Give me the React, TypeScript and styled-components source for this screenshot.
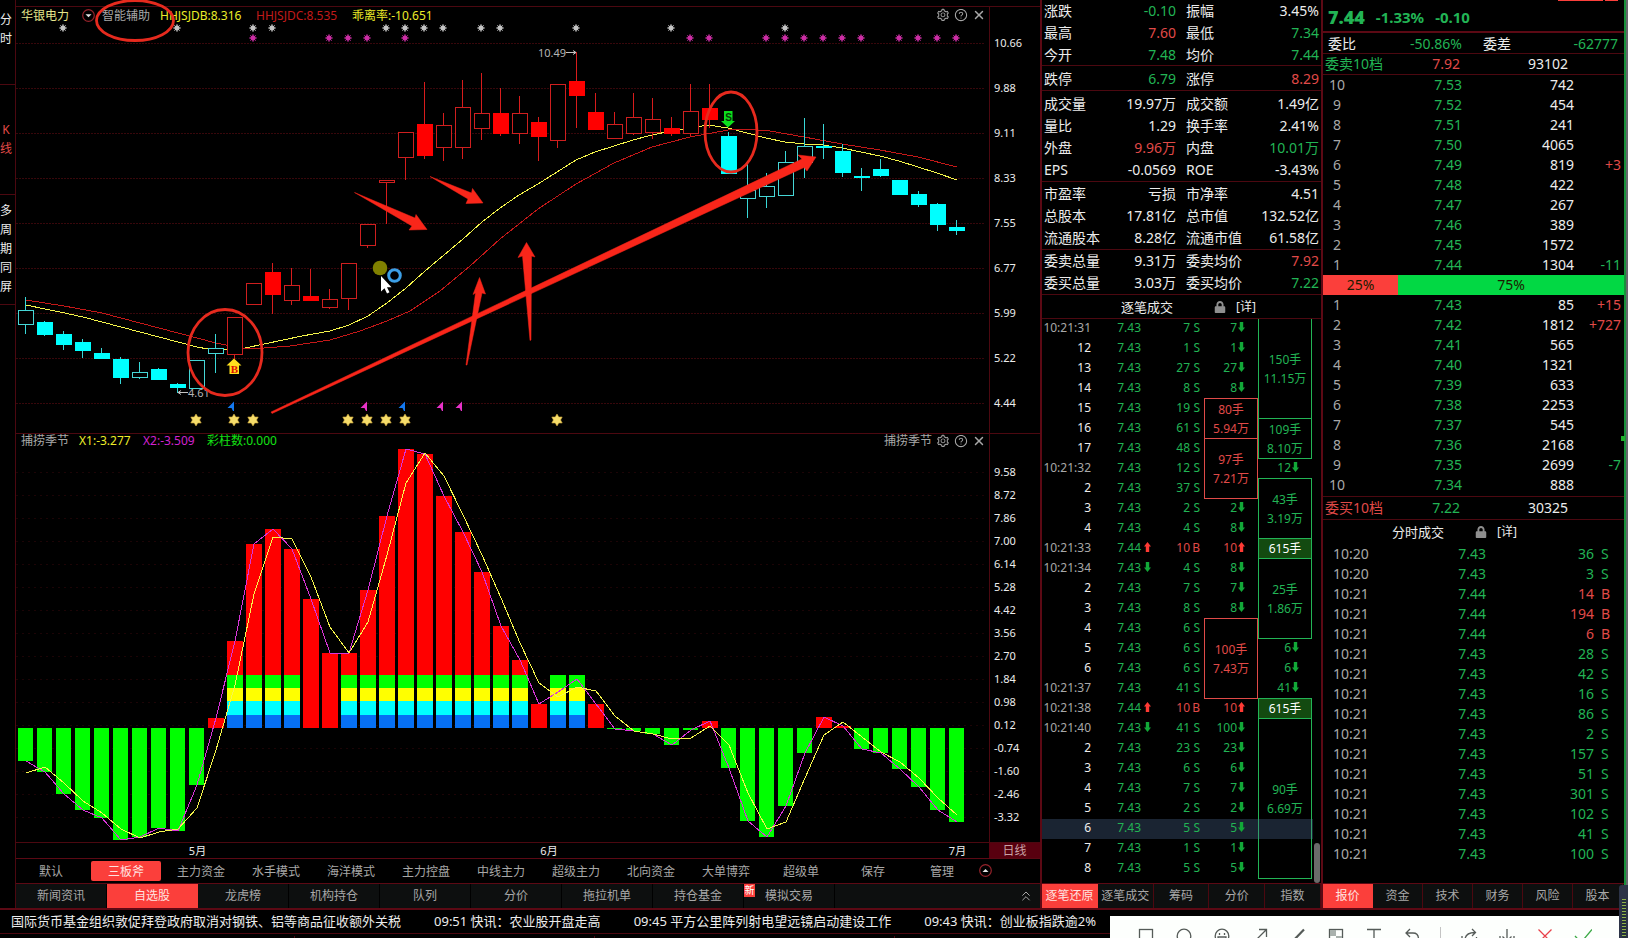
import React from "react";
import styled, { createGlobalStyle, css } from "styled-components";
import { AiOutlineSetting, AiOutlineQuestionCircle } from "react-icons/ai";
import { FaLock } from "react-icons/fa";
import { ChevronsUp, X } from "lucide-react";

const c = {
  green: "#22b455",
  red: "#e04a48",
  white: "#ececec",
  grey: "#a8a8a8",
  line: "#4c0810",
  frame: "#5c0914",
  active: "#fb3f3b",
  cyan: "#00ffff",
  pen: "#f9261a",
};

type Tone = "green" | "red" | "white" | "grey";

const GlobalStyle = createGlobalStyle`
  * { box-sizing: border-box; }
  html, body { margin: 0; background: #000; }
  body {
    overflow: hidden;
    color: ${c.white};
    font: 12px/20px "Noto Sans", "Noto Sans CJK SC", sans-serif;
  }
  button { margin: 0; padding: 0; border: 0; background: none; color: inherit; font: inherit; cursor: pointer; }
  table { border-collapse: separate; border-spacing: 0; table-layout: fixed; }
  td, th { padding: 0; font-weight: 400; white-space: nowrap; }
  dl, dt, dd, h2, p { margin: 0; font-weight: 400; }
`;

/* ---------- page frame ---------- */

const Page = styled.div`
  position: relative;
  display: flex;
  flex-direction: column;
  min-height: 100vh;
  overflow: hidden;
`;

const Workspace = styled.div`
  display: flex;
  align-items: stretch;
`;

const SideNav = styled.nav`
  display: flex;
  flex-direction: column;
  width: 16px;
  border-right: 1px solid ${c.line};
`;

const SideButton = styled.button<{ $first?: boolean; $active?: boolean }>`
  height: ${(p) => (p.$first ? 85 : 110)}px;
  padding-bottom: ${(p) => (p.$first ? 27 : 2)}px;
  padding-right: 3px;
  border-bottom: 1px solid ${c.line};
  color: ${(p) => (p.$active ? c.red : c.white)};
  line-height: 19px;
  word-break: break-all;
`;

const ChartColumn = styled.main`
  display: flex;
  flex: 1;
  flex-direction: column;
  min-width: 0;
  padding-top: 6px;
`;

const Pane = styled.section`
  display: flex;
  border-top: 1px solid ${c.line};
`;

const PaneBody = styled.div`
  flex: 1;
  min-width: 0;
`;

const PaneHeader = styled.header<{ $height: number }>`
  display: flex;
  align-items: center;
  gap: 10px;
  height: ${(p) => p.$height}px;
  padding: 0 3px 2px 5px;
  line-height: 15px;
  white-space: nowrap;
`;

const Legend = styled.span<{ $color: string; $width?: number }>`
  min-width: ${(p) => p.$width || 0}px;
  color: ${(p) => p.$color};
`;

const PaneTools = styled.div`
  display: flex;
  align-items: center;
  gap: 4px;
  margin-left: auto;
  color: ${c.grey};
`;

const ToolButton = styled.button`
  display: flex;
  width: 14px;
  height: 14px;
`;

const MenuButton = styled.button`
  display: flex;
  margin: 0 -3px 0 3px;
`;

const Plot = styled.svg`
  display: block;
  position: relative;
  width: 100%;
  overflow: visible;
  pointer-events: none;
`;

const Axis = styled.div<{ $pad: number; $step: number }>`
  width: 51px;
  padding: ${(p) => p.$pad}px 0 0 4px;
  border-left: 1px solid ${c.line};
  font-size: 11px;
  line-height: ${(p) => p.$step}px;
`;

const DateRow = styled.div`
  display: flex;
  height: 16px;
  border-top: 1px solid ${c.line};
  font-size: 11px;
  line-height: 15px;
`;

const Months = styled.div`
  display: grid;
  flex: 1;
  grid-template-columns: repeat(50, 19px);
  padding-left: 1px;
`;

const Month = styled.span<{ $col: string }>`
  grid-column: ${(p) => p.$col};
  justify-self: center;
  white-space: nowrap;
`;

const Period = styled.button`
  width: 51px;
  background: #58000f;
  color: #c9a3a6;
  font-size: 12px;
  line-height: 15px;
`;

const ModeBar = styled.nav`
  display: flex;
  align-items: center;
  gap: 5px;
  height: 25px;
  border-top: 1px solid ${c.frame};
  color: ${c.grey};
`;

const ModeTab = styled.button<{ $active?: boolean; $narrow?: boolean }>`
  width: ${(p) => (p.$narrow ? 64 : 70)}px;
  height: 20px;
  border-radius: 2px;
  background: ${(p) => (p.$active ? c.active : "transparent")};
  color: ${(p) => (p.$active ? "#ffe3e0" : c.grey)};
  line-height: 19px;
`;

const TabBar = styled.nav`
  display: flex;
  height: 25px;
  margin-top: auto;
  border-top: 1px solid ${c.frame};
  background: #0d0f0f;
`;

const Tab = styled.button<{ $width: number; $active?: boolean; $rule?: string }>`
  position: relative;
  width: ${(p) => p.$width}px;
  border-right: 1px solid ${(p) => (p.$active ? c.active : p.$rule || "#000")};
  background: ${(p) => (p.$active ? c.active : "transparent")};
  color: ${(p) => (p.$active ? "#ffe3e0" : c.grey)};
  line-height: 22px;
  white-space: nowrap;
`;

const NewBadge = styled.span`
  position: absolute;
  top: 0;
  left: 0;
  width: 11px;
  height: 13px;
  background: ${c.active};
  color: #fff;
  font-size: 10px;
  line-height: 12px;
`;

const ExpandButton = styled.button`
  display: flex;
  align-items: center;
  margin-left: auto;
  padding-right: 6px;
  color: ${c.grey};
`;

/* ---------- quote panels ---------- */

const Panel = styled.aside<{ $width: number }>`
  display: flex;
  flex-direction: column;
  width: ${(p) => p.$width}px;
  border-left: 2px solid ${c.frame};
`;

const StatGroup = styled.dl<{ $top?: number }>`
  display: grid;
  grid-template-columns: 132px 133px;
  column-gap: 10px;
  padding: ${(p) => p.$top || 0}px 2px 0;
  border-bottom: 1px solid ${c.line};
  font-size: 14px;
  line-height: 22px;

  &:first-child {
    height: 66px;
    line-height: 21px;
  }
`;

const Stat = styled.div`
  display: flex;
  justify-content: space-between;
  height: 22px;
`;

const StatValue = styled.dd<{ $tone: Tone }>`
  color: ${(p) => c[p.$tone]};
`;

const TradesHeader = styled.header<{ $left: number; $gap: number; $rule?: boolean }>`
  display: flex;
  align-items: center;
  height: 24px;
  padding-left: ${(p) => p.$left}px;
  border-bottom: ${(p) => (p.$rule ? `1px solid ${c.line}` : "0")};
  font-size: 13px;

  h2 {
    font-size: 13px;
  }
  svg {
    margin: 0 10px 0 ${(p) => p.$gap}px;
    color: #8f8f8f;
  }
`;

const DetailLink = styled.a`
  color: ${c.white};
  font-size: 12px;
  text-decoration: none;
`;

const TickArea = styled.div`
  display: flex;
  height: 564px;
`;

const TickTable = styled.table`
  width: 271px;
  height: 560px;
  font-size: 12px;
  line-height: 18px;
`;

const TickRow = styled.tr<{ $selected?: boolean }>`
  height: 20px;

  ${(p) =>
    p.$selected &&
    css`
      position: relative;
      z-index: 0;

      &::after {
        content: "";
        position: absolute;
        inset: 0;
        z-index: -1;
        background: rgba(80, 112, 155, 0.32);
      }
    `}
`;

const TickTime = styled.th<{ $full: boolean }>`
  padding: 0 1px 2px 0;
  color: ${(p) => (p.$full ? c.grey : c.white)};
  text-align: right;
`;

const TickCell = styled.td<{ $tone: Tone; $right: number }>`
  padding: 0 ${(p) => p.$right}px 2px 0;
  color: ${(p) => c[p.$tone]};
  text-align: right;
`;

const Slot = styled.span<{ $width: number }>`
  display: inline-block;
  width: ${(p) => p.$width}px;
  text-align: right;
`;

const BlockCell = styled.td<{ $tone: "red" | "green"; $open?: boolean; $solid?: boolean }>`
  padding-bottom: 1px;
  background: ${(p) => (p.$solid ? "#134a10" : "transparent")};
  box-shadow: inset 1px 0 ${(p) => c[p.$tone]}, inset -1px 0 ${(p) => c[p.$tone]},
    inset 0 -1px ${(p) => c[p.$tone]}, 0 ${(p) => (p.$open ? 0 : -1)}px ${(p) => c[p.$tone]};
  color: ${(p) => (p.$solid ? "#fff" : c[p.$tone])};
  line-height: 19px;
  text-align: center;
`;

const ScrollTrack = styled.div`
  display: flex;
  flex-direction: column;
  justify-content: flex-end;
  width: 8px;
`;

const ScrollThumb = styled.div`
  width: 6px;
  height: 40px;
  margin-left: 1px;
  border-radius: 3px;
  background: #6a6a6a;
`;

const PriceHead = styled.header`
  display: flex;
  align-items: center;
  gap: 11px;
  height: 33px;
  padding: 3px 5px 0;
  border-bottom: 2px solid ${c.frame};
  color: ${c.green};
  font-size: 15px;
  font-weight: 700;

  strong {
    font-size: 18px;
  }
`;

const TopMarks = styled.div`
  display: flex;
  gap: 2px;
  align-self: flex-start;
  margin: -3px 1px 0 auto;

  i {
    width: 45px;
    height: 1px;
    background: ${c.active};
  }
  i + i {
    width: 13px;
  }
`;

const RatioRow = styled.dl`
  display: grid;
  grid-template-columns: 134px 135px;
  column-gap: 21px;
  height: 21px;
  padding-left: 5px;
  border-bottom: 1px solid ${c.line};
  font-size: 14px;
  line-height: 21px;

  div {
    display: flex;
    justify-content: space-between;
  }
`;

const SumRow = styled.dl<{ $top?: boolean }>`
  display: grid;
  grid-template-columns: 62px 73px 108px;
  height: ${(p) => (p.$top ? 24 : 21)}px;
  padding-left: 2px;
  margin-top: ${(p) => (p.$top ? 1 : 0)}px;
  border-top: ${(p) => (p.$top ? `1px solid ${c.line}` : "0")};
  border-bottom: 1px solid ${c.line};
  font-size: 14px;
  line-height: ${(p) => (p.$top ? 22 : 20)}px;
  text-align: right;

  dt {
    text-align: left;
  }
`;

const Toned = styled.span<{ $tone: Tone }>`
  color: ${(p) => c[p.$tone]};
`;

const DepthTable = styled.table`
  width: 301px;
  font-size: 14px;
  line-height: 20px;
  text-align: right;

  tr {
    height: 20px;
  }
  th {
    color: ${c.grey};
    text-align: center;
  }
  td:last-child {
    padding-right: 3px;
  }
`;

const RatioBar = styled.div`
  display: flex;
  height: 20px;
  color: #1c1c00;
  font-size: 14px;
  line-height: 20px;
  text-align: center;
`;

const RatioPart = styled.div<{ $share: number; $color: string }>`
  flex: ${(p) => p.$share} 1 0;
  background: ${(p) => p.$color};
`;

const MinuteTable = styled.table`
  width: 301px;
  font-size: 14px;
  line-height: 20px;
  text-align: right;

  tr {
    height: 20px;
  }
  th {
    padding-left: 10px;
    color: ${c.grey};
    text-align: left;
  }
  td:last-child {
    padding-left: 7px;
    text-align: left;
  }
`;

const WindowEdge = styled.div`
  flex: 0 0 4px;
  border-left: 2px solid #18913a;
  background: #66666c;
`;

const EdgeDot = styled.i`
  position: absolute;
  top: 436px;
  right: 3px;
  width: 4px;
  height: 5px;
  background: #1fae2c;
`;

const Meter = styled.div`
  position: absolute;
  right: 0;
  bottom: 0;
  width: 9px;
  height: 53px;
  padding: 14px 2px 0 3px;
  border-radius: 3px 0 0 0;
  background: #2c3347;

  &::before {
    content: "";
    display: block;
    height: 100%;
    background: repeating-linear-gradient(#8fb04a 0 1px, #23303a 1px 3px);
  }
`;

/* ---------- bottom strips ---------- */

const Ticker = styled.div`
  display: flex;
  gap: 33px;
  height: 26px;
  padding-left: 11px;
  border-top: 2px solid ${c.frame};
  border-bottom: 1px solid ${c.line};
  overflow: hidden;
`;

const NewsLink = styled.a`
  color: ${c.white};
  font-size: 13px;
  line-height: 23px;
  text-decoration: none;
  white-space: nowrap;
`;

const StatusBar = styled.div`
  display: grid;
  flex: 1;
  grid-template-columns: 294px 300px 300px 1fr;
  padding-top: 2px;

  span + span {
    border-left: 1px solid ${c.line};
  }
`;

const CaptureBar = styled.div`
  position: absolute;
  right: 9px;
  bottom: 0;
  display: flex;
  height: 22px;
  padding: 0 17px;
  background: #fdfffd;
  overflow: hidden;
`;

const CaptureButton = styled.button`
  width: 38px;
  height: 30px;
  padding-top: 9px;

  svg {
    display: block;
    margin: 0 auto;
  }
`;

const CaptureRule = styled.i`
  width: 1px;
  height: 20px;
  margin: 11px 9px 0;
  background: #c4c4c4;
`;

/* ---------- chart data ---------- */

const STEP = 19;
const cx = (i: number) => 26 + STEP * i;

// [kind, body top, body bottom, wick top, wick bottom]; upper case kinds are solid
type Candle = [string, number, number, number, number];
const candles: Candle[] = [
  ["d", 310, 325, 297, 334], ["D", 322, 335, 321, 336], ["D", 334, 345, 331, 350], ["D", 342, 351, 339, 358],
  ["D", 353, 359, 348, 359], ["D", 359, 378, 357, 384], ["d", 372, 378, 362, 379], ["D", 369, 380, 368, 380],
  ["D", 384, 388, 383, 393], ["d", 360, 389, 360, 389], ["d", 348, 354, 334, 373], ["u", 317, 355, 317, 359],
  ["u", 283, 305, 283, 305], ["U", 272, 295, 263, 314], ["u", 285, 301, 268, 305], ["U", 296, 301, 269, 301],
  ["u", 299, 308, 289, 309], ["u", 263, 299, 263, 310], ["u", 224, 246, 224, 248], ["u", 180, 183, 180, 224],
  ["u", 132, 158, 132, 180], ["U", 124, 156, 82, 159], ["u", 125, 148, 113, 161], ["u", 107, 148, 80, 159],
  ["u", 113, 129, 73, 140], ["U", 113, 134, 88, 136], ["u", 113, 134, 96, 144], ["U", 122, 137, 117, 161],
  ["u", 84, 141, 84, 148], ["U", 81, 96, 52, 128], ["U", 112, 130, 93, 130], ["u", 124, 139, 112, 139],
  ["u", 117, 134, 93, 135], ["u", 119, 133, 98, 139], ["U", 128, 134, 117, 136], ["u", 111, 134, 84, 136],
  ["U", 108, 120, 84, 128], ["D", 136, 174, 132, 174], ["d", 190, 199, 164, 218], ["d", 186, 197, 173, 208],
  ["d", 162, 196, 151, 196], ["d", 146, 163, 118, 178], ["D", 146, 148, 124, 159], ["D", 151, 173, 144, 177],
  ["D", 176, 178, 168, 191], ["D", 169, 176, 159, 177], ["D", 180, 195, 180, 195], ["D", 194, 205, 191, 207],
  ["D", 204, 225, 203, 231], ["D", 227, 231, 220, 235],
];

const fastLine =
  "26,305 45,309 60,312 83,317 102,322 121,327 140,332 159,337 178,342 197,347 208,349 227,350 245,348 264,344 283,340 302,336 330,331 349,325 368,316 387,303 406,288 425,271 444,255 463,239 482,222 500,208 519,195 538,184 557,172 576,160 595,152 614,146 633,140 652,135 671,131 690,128 708,125 728,128 747,133 766,138 785,142 804,144 823,145 842,148 861,152 880,156 899,161 918,167 937,173 957,180";
const slowLine =
  "26,300 64,306 102,313 140,323 178,333 216,343 240,348 264,348 290,346 330,340 360,331 387,321 410,311 440,291 470,266 500,239 538,209 576,184 614,163 652,147 690,137 728,130 745,129 770,131 804,137 842,144 880,150 918,157 957,167";

const greyBursts = [2, 8, 12, 13, 19, 20, 21, 22, 24, 25, 29, 34, 40];
const pinkBursts = [12, 16, 17, 18, 20, 35, 36, 39, 40, 41, 42, 43, 44, 46, 47, 48, 49];
const goldStars = [9, 11, 12, 17, 18, 19, 20, 28];
const flags: [number, string][] = [[11, "#1478f0"], [18, "#e832c8"], [20, "#1478f0"], [22, "#e832c8"], [23, "#e832c8"]];

const ZERO = 728;
const barEnds = [
  761, 772, 794, 810, 818, 840, 837, 828, 831, 785, 718, 641, 544, 529, 549, 599, 653, 653, 590, 516, 449, 454, 496, 532,
  572, 626, 660, 704, 675, 675, 704, 729, 731, 734, 745, 730, 721, 768, 821, 837, 806, 753, 717, 726, 749, 753, 769, 787,
  810, 822,
];
const rainbow = new Set([11, 12, 13, 14, 17, 18, 19, 20, 21, 22, 23, 24, 25, 26, 28, 29]);
const bands: [number, number, string][] = [
  [675, 13, "#00ff00"], [688, 13, "#ffff00"], [701, 14, "#00ffff"], [715, 13, "#0670f4"],
];
const x2Line = barEnds.map((y, i) => (i === 28 ? 692 : i === 29 ? 679 : y));
const x1Line = [
  773, 767, 783, 801, 813, 829, 838, 832, 829, 808, 750, 685, 594, 537, 539, 577, 627, 653, 622, 555, 483, 453, 476, 515,
  555, 598, 643, 683, 697, 687, 691, 716, 731, 734, 739, 738, 726, 745, 793, 829, 822, 778, 735, 722, 737, 752, 762, 778,
  798, 815,
];
const toPoints = (ys: number[]) => ys.map((y, i) => `${cx(i)},${y}`).join(" ");

const priceTicks = ["10.66", "9.88", "9.11", "8.33", "7.55", "6.77", "5.99", "5.22", "4.44"];
const indexTicks = [
  "9.58", "8.72", "7.86", "7.00", "6.14", "5.28", "4.42", "3.56", "2.70", "1.84", "0.98", "0.12", "-0.74", "-1.60", "-2.46", "-3.32",
];

/* ---------- chart parts ---------- */

const Burst = ({ x, y, color }: { x: number; y: number; color: string }) => (
  <g stroke={color} transform={`translate(${x} ${y})`}>
    <circle r="2.2" fill={color} />
    <path d="M-4 0H4M0-4V4M-2.8-2.8L2.8 2.8M-2.8 2.8L2.8-2.8" strokeWidth="0.8" />
  </g>
);

const GoldStar = ({ x }: { x: number }) => (
  <path
    transform={`translate(${x} 420)`}
    d="M0-6L1.8-3H5.2L3.6 0L5.2 3H1.8L0 6L-1.8 3H-5.2L-3.6 0L-5.2-3H-1.8Z"
    fill="#f6dc6a"
    stroke="#c9a53a"
    strokeWidth="0.6"
  />
);

const CandleShape = ({ i, data }: { i: number; data: Candle }) => {
  const [kind, top, bottom, high, low] = data;
  const solid = kind === kind.toUpperCase();
  const up = kind.toLowerCase() === "u";
  const x = cx(i);
  const stroke = up ? (solid ? "#ff0000" : "#cf1f1f") : solid ? c.cyan : "#46d6d6";
  return (
    <g>
      <path d={`M${x - 0.5} ${high}V${low}`} stroke={up ? "#d81c1c" : "#38d8d8"} />
      {solid ? (
        <rect x={x - 8} y={top} width="16" height={bottom - top} fill={stroke} />
      ) : (
        <rect x={x - 7.5} y={top + 0.5} width="15" height={bottom - top - 1} fill="#000" stroke={stroke} />
      )}
    </g>
  );
};

const PriceChart = () => (
  <Plot viewBox="16 25 973 408" preserveAspectRatio="xMinYMin meet" role="img" aria-label="日线 K线图">
    {priceTicks.map((t, i) => (
      <path key={t} d={`M16 ${43.5 + i * 45}H984`} stroke="#38070b" strokeDasharray="2 1" shapeRendering="crispEdges" />
    ))}
    <polyline points={fastLine} fill="none" stroke="#f4f44a" shapeRendering="crispEdges" />
    <polyline points={slowLine} fill="none" stroke="#c41818" shapeRendering="crispEdges" />
    {candles.map((d, i) => (
      <CandleShape key={i} i={i} data={d} />
    ))}
    {greyBursts.map((i) => (
      <Burst key={i} x={cx(i) - 1} y={28} color="#c4c4c4" />
    ))}
    {pinkBursts.map((i) => (
      <Burst key={i} x={cx(i) - 1} y={38} color="#cc2fa4" />
    ))}
    {goldStars.map((i) => (
      <GoldStar key={i} x={cx(i) - 1} />
    ))}
    {flags.map(([i, color]) => (
      <path key={i} d={`M${cx(i) - 1} 401.500V411H${cx(i) - 2}L${cx(i) - 3.5} 408H${cx(i) - 7.5}Z`} fill={color} />
    ))}

    <g fill="#b4b4b4" fontSize="11">
      <text x="538" y="57">10.49</text>
      <text x="188" y="397">4.61</text>
    </g>
    <path d="M566 52.5H576M573 50.5L576 52.5L573 54.5M188 392.5H178M181 390.5L178 392.5L181 394.5" fill="none" stroke="#c4c4c4" />

    <path d="M234 358.500L241.500 365.500H239V374H229.500V365.500H226.500Z" fill="#ffe11e" />
    <text x="234.500" y="372.500" textAnchor="middle" fontFamily="Liberation Serif, serif" fontWeight="700" fontSize="11" fill="#e01000">B</text>
    <path d="M724 111H732.500V121H735L728 127.500L721 121H724Z" fill="#0ce01c" />
    <text x="728.500" y="120.500" textAnchor="middle" fontFamily="Liberation Sans, sans-serif" fontWeight="700" fontSize="10" fill="#083808">S</text>

    <g fill="none" stroke="#e62a1e" strokeWidth="2.800">
      <ellipse cx="135" cy="20.500" rx="38.500" ry="20" />
      <ellipse cx="225" cy="352.500" rx="37" ry="43" />
      <ellipse cx="731" cy="132" rx="26" ry="40" />
    </g>
    <g fill={c.pen} stroke={c.pen} strokeWidth="0.500">
      <path d="M354.500 192.500L415 218L416 214.500L427 229.500L409 230L412 226Z" />
      <path d="M430 176.500L471.500 193L472.500 188.500L483 203L466 203.500L468 199Z" />
      <path d="M466 365L475.500 293L473 294.500L479.500 277.500L485.500 294L482 293L467 365Z" />
      <path d="M530 340.500L522.500 256L518 257.500L526.500 242.500L535 257L531.500 256L531 340Z" />
      <path d="M271 412L802 159L798 155L816 157L807 171L804 167.500L272 413.500Z" />
    </g>

    <circle cx="380" cy="268" r="7.300" fill="#808000" />
    <circle cx="394.500" cy="275.500" r="5.800" fill="none" stroke="#3c9fe6" strokeWidth="3" />
    <path d="M381 276V291.500L384.500 288.200L387 293.500L389.500 292.300L387 287.200H391.500Z" fill="#fff" />
  </Plot>
);

const IndexChart = () => (
  <Plot viewBox="16 449 973 393" preserveAspectRatio="xMinYMin meet" role="img" aria-label="捕捞季节指标图">
    {indexTicks.map((t, i) => (
      <path key={t} d={`M16 ${472.5 + i * 23}H984`} stroke="#1c0406" strokeDasharray="2 4" />
    ))}
    {barEnds.map((end, i) => {
      const up = end < ZERO;
      return (
        <rect
          key={i}
          x={cx(i) - 8}
          y={up ? end : ZERO}
          width={up ? 16 : 15}
          height={Math.abs(end - ZERO)}
          fill={up ? "#ff0000" : "#00ff00"}
        />
      );
    })}
    {[...rainbow].map((i) =>
      bands.map(([y, h, fill]) => <rect key={`${i}-${y}`} x={cx(i) - 8} y={y} width="16" height={h} fill={fill} />)
    )}
    <polyline points={toPoints(x2Line)} fill="none" stroke="#d835d8" shapeRendering="crispEdges" />
    <polyline points={toPoints(x1Line)} fill="none" stroke="#f6f64c" shapeRendering="crispEdges" />
  </Plot>
);

const RoundToggle = ({ up }: { up?: boolean }) => (
  <svg width="13" height="13" viewBox="0 0 13 13" aria-hidden="true">
    <circle cx="6.500" cy="6.500" r="5.800" fill="none" stroke="#94222a" strokeWidth="1.200" />
    <path d={up ? "M3.500 8L6.500 5L9.500 8Z" : "M3.500 5.200H9.500L6.500 8.200Z"} fill="#e4e4e4" />
  </svg>
);

const Tools = ({ label }: { label?: string }) => (
  <PaneTools>
    {label}
    <ToolButton aria-label="设置"><AiOutlineSetting size={14} /></ToolButton>
    <ToolButton aria-label="帮助"><AiOutlineQuestionCircle size={14} /></ToolButton>
    <ToolButton aria-label="关闭"><X size={14} strokeWidth={2.5} /></ToolButton>
  </PaneTools>
);

/* ---------- quote data ---------- */

type StatItem = [string, string, Tone?];
const statGroups: { top?: number; items: StatItem[] }[] = [
  { items: [["涨跌", "-0.10", "green"], ["振幅", "3.45%"], ["最高", "7.60", "red"], ["最低", "7.34", "green"], ["今开", "7.48", "green"], ["均价", "7.44", "green"]] },
  { top: 2, items: [["跌停", "6.79", "green"], ["涨停", "8.29", "red"]] },
  { top: 2, items: [["成交量", "19.97万"], ["成交额", "1.49亿"], ["量比", "1.29"], ["换手率", "2.41%"], ["外盘", "9.96万", "red"], ["内盘", "10.01万", "green"], ["EPS", "-0.0569"], ["ROE", "-3.43%"]] },
  { top: 1, items: [["市盈率", "亏损"], ["市净率", "4.51"], ["总股本", "17.81亿"], ["总市值", "132.52亿"], ["流通股本", "8.28亿"], ["流通市值", "61.58亿"]] },
  { items: [["委卖总量", "9.31万"], ["委卖均价", "7.92", "red"], ["委买总量", "3.03万"], ["委买均价", "7.22", "green"]] },
];

type Block = { tone: "red" | "green"; span: number; hands: string; amount?: string };
type Tick = {
  time: string;
  qty: string;
  total?: string;
  block?: Block;
  side?: "B";
  move?: "up" | "down";
  outer?: string;
  outerBlock?: Block;
};
const ticks: Tick[] = [
  { time: "10:21:31", qty: "7", total: "7", outerBlock: { tone: "green", span: 5, hands: "150手", amount: "11.15万" } },
  { time: "12", qty: "1", total: "1" },
  { time: "13", qty: "27", total: "27" },
  { time: "14", qty: "8", total: "8" },
  { time: "15", qty: "19", block: { tone: "red", span: 2, hands: "80手", amount: "5.94万" } },
  { time: "16", qty: "61", outerBlock: { tone: "green", span: 2, hands: "109手", amount: "8.10万" } },
  { time: "17", qty: "48", block: { tone: "red", span: 3, hands: "97手", amount: "7.21万" } },
  { time: "10:21:32", qty: "12", outer: "12" },
  { time: "2", qty: "37", outerBlock: { tone: "green", span: 3, hands: "43手", amount: "3.19万" } },
  { time: "3", qty: "2", total: "2" },
  { time: "4", qty: "4", total: "8" },
  { time: "10:21:33", qty: "10", total: "10", side: "B", move: "up", outerBlock: { tone: "green", span: 1, hands: "615手" } },
  { time: "10:21:34", qty: "4", total: "8", move: "down", outerBlock: { tone: "green", span: 4, hands: "25手", amount: "1.86万" } },
  { time: "2", qty: "7", total: "7" },
  { time: "3", qty: "8", total: "8" },
  { time: "4", qty: "6", block: { tone: "red", span: 4, hands: "100手", amount: "7.43万" } },
  { time: "5", qty: "6", outer: "6" },
  { time: "6", qty: "6", outer: "6" },
  { time: "10:21:37", qty: "41", outer: "41" },
  { time: "10:21:38", qty: "10", total: "10", side: "B", move: "up", outerBlock: { tone: "green", span: 1, hands: "615手" } },
  { time: "10:21:40", qty: "41", total: "100", move: "down", outerBlock: { tone: "green", span: 8, hands: "90手", amount: "6.69万" } },
  { time: "2", qty: "23", total: "23" },
  { time: "3", qty: "6", total: "6" },
  { time: "4", qty: "7", total: "7" },
  { time: "5", qty: "2", total: "2" },
  { time: "6", qty: "5", total: "5" },
  { time: "7", qty: "1", total: "1" },
  { time: "8", qty: "5", total: "5" },
];
const SELECTED_TICK = 25;

type Depth = [string, string, string, string?];
const asks: Depth[] = [
  ["10", "7.53", "742"], ["9", "7.52", "454"], ["8", "7.51", "241"], ["7", "7.50", "4065"], ["6", "7.49", "819", "+3"],
  ["5", "7.48", "422"], ["4", "7.47", "267"], ["3", "7.46", "389"], ["2", "7.45", "1572"], ["1", "7.44", "1304", "-11"],
];
const bids: Depth[] = [
  ["1", "7.43", "85", "+15"], ["2", "7.42", "1812", "+727"], ["3", "7.41", "565"], ["4", "7.40", "1321"], ["5", "7.39", "633"],
  ["6", "7.38", "2253"], ["7", "7.37", "545"], ["8", "7.36", "2168"], ["9", "7.35", "2699", "-7"], ["10", "7.34", "888"],
];
const minutes: [string, string, string, "S" | "B"][] = [
  ["10:20", "7.43", "36", "S"], ["10:20", "7.43", "3", "S"], ["10:21", "7.44", "14", "B"], ["10:21", "7.44", "194", "B"],
  ["10:21", "7.44", "6", "B"], ["10:21", "7.43", "28", "S"], ["10:21", "7.43", "42", "S"], ["10:21", "7.43", "16", "S"],
  ["10:21", "7.43", "86", "S"], ["10:21", "7.43", "2", "S"], ["10:21", "7.43", "157", "S"], ["10:21", "7.43", "51", "S"],
  ["10:21", "7.43", "301", "S"], ["10:21", "7.43", "102", "S"], ["10:21", "7.43", "41", "S"], ["10:21", "7.43", "100", "S"],
];

const modes = ["默认", "三板斧", "主力资金", "水手模式", "海洋模式", "主力控盘", "中线主力", "超级主力", "北向资金", "大单博弈", "超级单", "保存", "管理"];
const lists = ["新闻资讯", "自选股", "龙虎榜", "机构持仓", "队列", "分价", "拖拉机单", "持仓基金", "模拟交易"];
const news = [
  "国际货币基金组织敦促拜登政府取消对钢铁、铝等商品征收额外关税",
  "09:51 快讯：农业股开盘走高",
  "09:45 平方公里阵列射电望远镜启动建设工作",
  "09:43 快讯：创业板指跌逾2%",
];

/* ---------- quote parts ---------- */

const MoveArrow = ({ dir }: { dir: "up" | "down" }) => (
  <svg width="7" height="10" viewBox="0 0 7 10" aria-hidden="true">
    <path
      d={dir === "up" ? "M3.500 0L7 4.500H5.200V10H1.800V4.500H0Z" : "M1.800 0H5.200V5.500H7L3.500 10L0 5.500H1.800Z"}
      fill={dir === "up" ? "#ff3a34" : "#12a838"}
    />
  </svg>
);

const BlockBox = ({ block, open }: { block: Block; open?: boolean }) => (
  <BlockCell rowSpan={block.span} $tone={block.tone} $open={open} $solid={!block.amount}>
    {block.hands}
    {block.amount && <br />}
    {block.amount}
  </BlockCell>
);

const TickLine = ({ t, i }: { t: Tick; i: number }) => {
  const tone: Tone = t.side ? "red" : "green";
  return (
    <TickRow $selected={i === SELECTED_TICK}>
      <TickTime scope="row" $full={t.time.includes(":")}>{t.time}</TickTime>
      <TickCell $tone="green" $right={1}>
        {t.side ? "7.44" : "7.43"}
        <Slot $width={10}>{t.move && <MoveArrow dir={t.move} />}</Slot>
      </TickCell>
      <TickCell $tone={tone} $right={4}>
        {t.qty}
        <Slot $width={10}>{t.side || "S"}</Slot>
      </TickCell>
      {t.block && <BlockBox block={t.block} />}
      {t.total && (
        <TickCell $tone={tone} $right={13}>
          {t.total}
          <Slot $width={8}><MoveArrow dir={t.side ? "up" : "down"} /></Slot>
        </TickCell>
      )}
      {t.outerBlock && <BlockBox block={t.outerBlock} open={i === 0} />}
      {t.outer && (
        <TickCell $tone="green" $right={13}>
          {t.outer}
          <Slot $width={8}><MoveArrow dir="down" /></Slot>
        </TickCell>
      )}
    </TickRow>
  );
};

const DepthRows = ({ rows }: { rows: Depth[] }) => (
  <DepthTable>
    <colgroup>
      <col width="28" />
      <col width="111" />
      <col width="112" />
      <col width="50" />
    </colgroup>
    <tbody>
      {rows.map(([level, price, qty, delta]) => (
        <tr key={level}>
          <th scope="row">{level}</th>
          <td><Toned $tone="green">{price}</Toned></td>
          <td>{qty}</td>
          <td>{delta && <Toned $tone={delta[0] === "+" ? "red" : "green"}>{delta}</Toned>}</td>
        </tr>
      ))}
    </tbody>
  </DepthTable>
);

type CaptureItem = { name: string; color?: string; d: React.ReactNode };
const capture: CaptureItem[] = [
  { name: "矩形", d: <rect x="1.500" y="2.500" width="13" height="13" /> },
  { name: "椭圆", d: <circle cx="8" cy="9" r="6.800" /> },
  { name: "表情", d: <><circle cx="8" cy="9" r="6.800" /><path d="M5.500 6V8M10.500 6V8M4 10H12C12 15 4 15 4 10Z" /></> },
  { name: "箭头", d: <path d="M1 16L14 3M7 2.500H14.500V10" /> },
  { name: "画笔", d: <path d="M2 15L14 2.500" strokeWidth="2.200" /> },
  { name: "马赛克", d: <><rect x="1.500" y="2.500" width="13" height="13" /><path d="M2 3H8V9H2ZM8 9H14V15H8Z" fill="#a9b1ad" stroke="none" /></> },
  { name: "文字", d: <path d="M1 2.500H15M8 2.500V16" /> },
  { name: "撤销", d: <path d="M6 2L2 6L6 10M2 6H9Q14.500 6 14.500 12V14" /> },
];
const captureEnd: CaptureItem[] = [
  { name: "分享", d: <path d="M1 16V9M4 12Q5 5.500 14 5.500M11 2L14.500 5.500L11 9M15.500 10V16" /> },
  { name: "保存", d: <path d="M8 2V14M3.500 9.500L8 14L12.500 9.500M1 9V16M15 9V16" /> },
  { name: "取消", color: "#e8414a", d: <path d="M1.500 2.500L14.500 15.500M14.500 2.500L1.500 15.500" /> },
  { name: "完成", color: "#3ba946", d: <path d="M0 9L6 15.500L17 2.500" /> },
];
const CaptureIcon = ({ item }: { item: CaptureItem }) => (
  <CaptureButton aria-label={item.name}>
    <svg width="18" height="18" viewBox="-1 0 18 18" fill="none" stroke={item.color || "#555b58"} strokeWidth="1.300">
      {item.d}
    </svg>
  </CaptureButton>
);

const detailHeader = (title: string) => (
  <>
    <h2>{title}</h2>
    <FaLock size={12} />
    <DetailLink href="#detail">[详]</DetailLink>
  </>
);

export default function App() {
  return (
    <Page>
      <GlobalStyle />
      <Workspace>
        <SideNav>
          <SideButton $first>分时</SideButton>
          <SideButton $active>K线</SideButton>
          <SideButton>多周期同屏</SideButton>
        </SideNav>

        <ChartColumn>
          <Pane>
            <PaneBody>
              <PaneHeader $height={18}>
                <Legend $color="#e6e68c">华银电力</Legend>
                <MenuButton aria-label="切换股票"><RoundToggle /></MenuButton>
                <Legend $color={c.grey}>智能辅助</Legend>
                <Legend $color="#ecec28" $width={86}>HHJSJDB:8.316</Legend>
                <Legend $color="#c01a1a" $width={86}>HHJSJDC:8.535</Legend>
                <Legend $color="#ecec28">乖离率:-10.651</Legend>
                <Tools />
              </PaneHeader>
              <PriceChart />
            </PaneBody>
            <Axis $pad={13} $step={45}>
              {priceTicks.map((t) => <div key={t}>{t}</div>)}
            </Axis>
          </Pane>

          <Pane>
            <PaneBody>
              <PaneHeader $height={15}>
                <Legend $color={c.grey}>捕捞季节</Legend>
                <Legend $color="#ecec28" $width={54}>X1:-3.277</Legend>
                <Legend $color="#d022d0" $width={54}>X2:-3.509</Legend>
                <Legend $color="#14e014">彩柱数:0.000</Legend>
                <Tools label="捕捞季节" />
              </PaneHeader>
              <IndexChart />
            </PaneBody>
            <Axis $pad={26} $step={23}>
              {indexTicks.map((t) => <div key={t}>{t}</div>)}
            </Axis>
          </Pane>

          <DateRow>
            <Months>
              <Month $col="10">5月</Month>
              <Month $col="28 / span 2">6月</Month>
              <Month $col="50">7月</Month>
            </Months>
            <Period>日线</Period>
          </DateRow>

          <ModeBar>
            {modes.map((m) => (
              <ModeTab key={m} $active={m === "三板斧"} $narrow={m === "保存" || m === "管理"}>{m}</ModeTab>
            ))}
            <ToolButton aria-label="收起"><RoundToggle up /></ToolButton>
          </ModeBar>

          <TabBar>
            {lists.map((m) => (
              <Tab key={m} $width={91} $active={m === "自选股"}>
                {m === "模拟交易" && <NewBadge>新</NewBadge>}
                {m}
              </Tab>
            ))}
            <ExpandButton aria-label="展开"><ChevronsUp size={16} strokeWidth={1.5} /></ExpandButton>
          </TabBar>
        </ChartColumn>

        <Panel $width={281}>
          {statGroups.map((g, i) => (
            <StatGroup key={i} $top={g.top}>
              {g.items.map(([label, value, tone]) => (
                <Stat key={label}>
                  <dt>{label}</dt>
                  <StatValue $tone={tone || "white"}>{value}</StatValue>
                </Stat>
              ))}
            </StatGroup>
          ))}
          <TradesHeader $left={79} $gap={41} $rule>{detailHeader("逐笔成交")}</TradesHeader>
          <TickArea>
            <TickTable>
              <colgroup>
                <col width="50" />
                <col width="60" />
                <col width="52" />
                <col width="54" />
                <col width="54" />
                <col width="1" />
              </colgroup>
              <tbody>
                {ticks.map((t, i) => <TickLine key={i} t={t} i={i} />)}
              </tbody>
            </TickTable>
            <ScrollTrack><ScrollThumb /></ScrollTrack>
          </TickArea>
          <TabBar>
            {["逐笔还原", "逐笔成交", "筹码", "分价", "指数"].map((m, i) => (
              <Tab key={m} $width={56} $active={i === 0} $rule={c.line}>{m}</Tab>
            ))}
          </TabBar>
        </Panel>

        <Panel $width={303}>
          <PriceHead>
            <strong>7.44</strong>
            <span>-1.33%</span>
            <span>-0.10</span>
            <TopMarks><i /><i /></TopMarks>
          </PriceHead>
          <RatioRow>
            <div><dt>委比</dt><StatValue $tone="green">-50.86%</StatValue></div>
            <div><dt>委差</dt><StatValue $tone="green">-62777</StatValue></div>
          </RatioRow>
          <SumRow>
            <dt><Toned $tone="green">委卖10档</Toned></dt>
            <StatValue $tone="red">7.92</StatValue>
            <dd>93102</dd>
          </SumRow>
          <DepthRows rows={asks} />
          <RatioBar>
            <RatioPart $share={25} $color="#fb3f3b">25%</RatioPart>
            <RatioPart $share={75} $color="#02d844">75%</RatioPart>
          </RatioBar>
          <DepthRows rows={bids} />
          <SumRow $top>
            <dt><Toned $tone="red">委买10档</Toned></dt>
            <StatValue $tone="green">7.22</StatValue>
            <dd>30325</dd>
          </SumRow>
          <TradesHeader $left={69} $gap={31}>{detailHeader("分时成交")}</TradesHeader>
          <MinuteTable>
            <colgroup>
              <col width="60" />
              <col width="103" />
              <col width="108" />
              <col width="30" />
            </colgroup>
            <tbody>
              {minutes.map(([time, price, qty, side], i) => (
                <tr key={i}>
                  <th scope="row">{time}</th>
                  <td><Toned $tone="green">{price}</Toned></td>
                  <td><Toned $tone={side === "B" ? "red" : "green"}>{qty}</Toned></td>
                  <td><Toned $tone={side === "B" ? "red" : "green"}>{side}</Toned></td>
                </tr>
              ))}
            </tbody>
          </MinuteTable>
          <TabBar>
            {["报价", "资金", "技术", "财务", "风险", "股本"].map((m, i) => (
              <Tab key={m} $width={50} $active={i === 0} $rule={c.line}>{m}</Tab>
            ))}
          </TabBar>
        </Panel>

        <WindowEdge />
      </Workspace>

      <Ticker>
        {news.map((n) => <NewsLink key={n} href="#news">{n}</NewsLink>)}
      </Ticker>
      <StatusBar><span /><span /><span /><span /></StatusBar>

      <CaptureBar>
        {capture.map((item) => <CaptureIcon key={item.name} item={item} />)}
        <CaptureRule />
        {captureEnd.map((item) => <CaptureIcon key={item.name} item={item} />)}
      </CaptureBar>
      <EdgeDot />
      <Meter />
    </Page>
  );
}
